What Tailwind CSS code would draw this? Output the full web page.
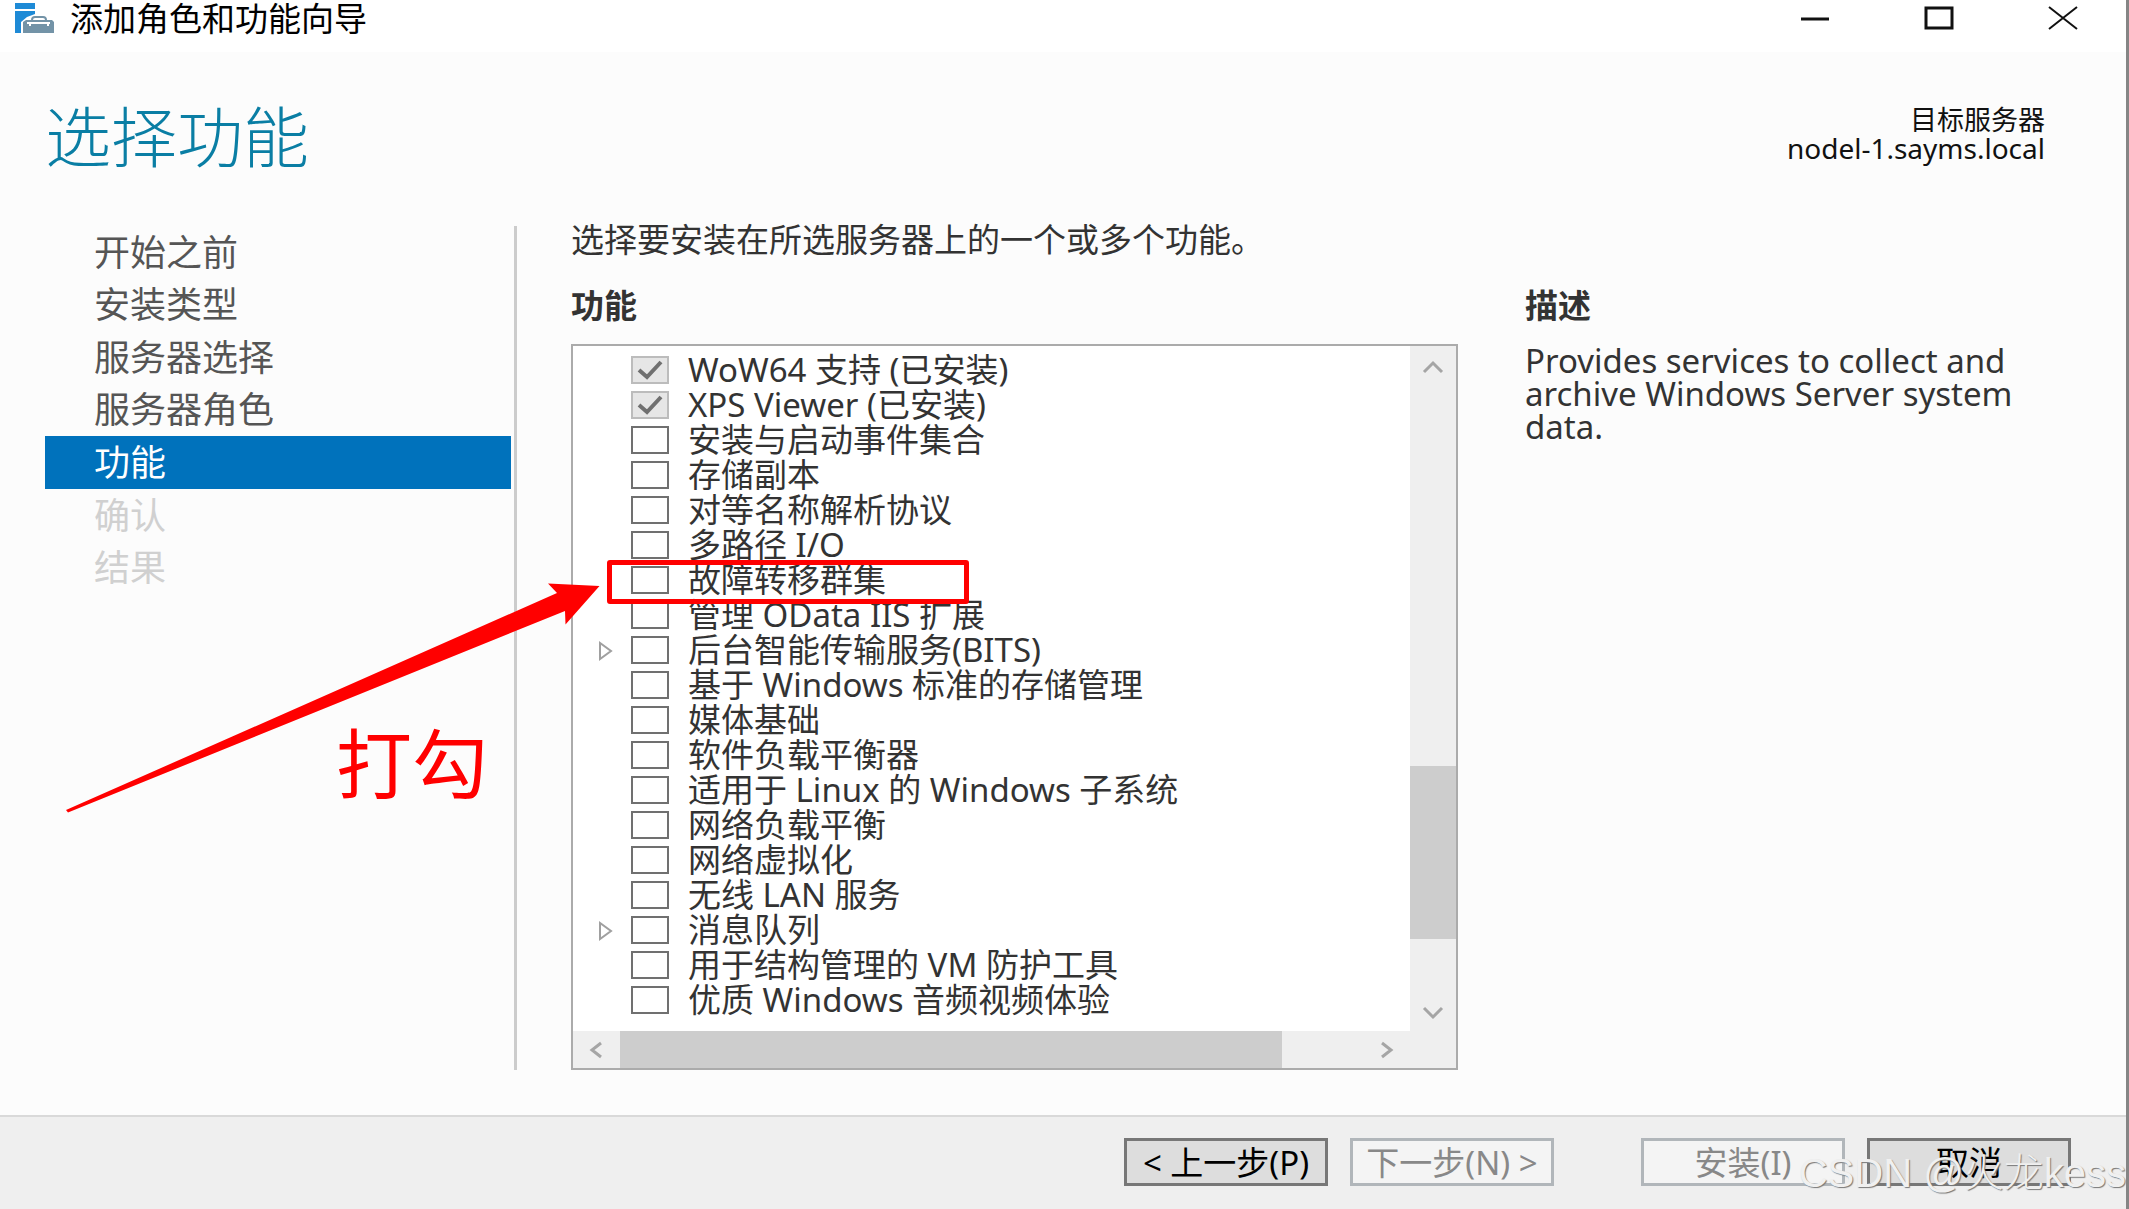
<!DOCTYPE html>
<html lang="zh-CN">
<head>
    <meta charset="UTF-8">
    <meta name="viewport" content="width=device-width, initial-scale=1.0">
    <title>添加角色和功能向导</title>
    <script src="https://cdn.jsdelivr.net/npm/@tailwindcss/browser@4"></script>
    <style>
        body {
            font-family: 'Noto Sans', 'Noto Sans CJK SC', sans-serif;
        }
        /* Grey tick of the installed features */
        .feature:checked {
            background: #e6e6e6 url("data:image/svg+xml,%3Csvg xmlns='http://www.w3.org/2000/svg' viewBox='0 0 34 24'%3E%3Cpath d='M6 12l8 7L28 4' fill='none' stroke='%23707070' stroke-width='4'/%3E%3C/svg%3E") center / 100% 100% no-repeat;
            border-color: #bcbcbc;
        }
    </style>
</head>

<body class="min-h-screen flex flex-col relative overflow-x-hidden bg-[#fcfcfc] text-[#333] text-[33px] leading-[35px] border-r-3 border-[#858585]">

    <!-- Title bar -->
    <header class="h-[52px] shrink-0 bg-white flex items-start justify-between pl-[14px] pr-12">
        <div class="flex items-center gap-4 text-black">
            <svg class="w-10 h-9" viewBox="0 0 40 36">
                <path d="M1 3h20v6H1zM1 11h20v3l-8 3-6 5v11H1z" fill="#1e8ad6"/>
                <path d="M9 22l3-2h26l2 2v11H9z" fill="#7393a7"/>
                <path d="M18 20q0-3 3-3h8q3 0 3 3" fill="none" stroke="#7393a7" stroke-width="2"/>
                <path d="M13 23h23M16 23v3M34 23v3" fill="none" stroke="#fff" stroke-width="2"/>
            </svg>
            <span>添加角色和功能向导</span>
        </div>
        <div class="flex gap-[94px] pt-1">
            <button aria-label="最小化" class="w-[30px] h-7">
                <svg class="w-full h-full" viewBox="0 0 30 28"><path d="M1 15h28" stroke="#111" stroke-width="3"/></svg>
            </button>
            <button aria-label="最大化" class="w-[30px] h-7">
                <svg class="w-full h-full" viewBox="0 0 30 28"><path d="M2 4h26v20H2z" fill="none" stroke="#111" stroke-width="3"/></svg>
            </button>
            <button aria-label="关闭" class="w-[30px] h-7">
                <svg class="w-full h-full" viewBox="0 0 30 28"><path d="M1 3l28 22M29 3L1 25" stroke="#111" stroke-width="2"/></svg>
            </button>
        </div>
    </header>

    <!-- Page heading -->
    <div class="h-[174px] shrink-0 flex justify-between pl-[45px] pr-[81px] pt-12">
        <h1 class="text-[66px] leading-[72px] font-light text-[#0a7ea4]">选择功能</h1>
        <div class="pt-1.5 text-right text-[27px] leading-7 text-[#111]">
            <p>目标服务器</p>
            <p class="text-[28px]">nodel-1.sayms.local</p>
        </div>
    </div>

    <main class="grow grid grid-cols-[472px_minmax(0,941fr)_minmax(0,587fr)] pl-[45px] pr-[81px] pb-[45px]">
        <!-- Wizard steps -->
        <nav class="border-r-3 border-[#ccc] pr-[3px]">
            <ul class="grid grid-rows-7 h-92 text-[36px] text-[#555]">
                <li><a href="#" class="flex h-full items-center pl-[49px]">开始之前</a></li>
                <li><a href="#" class="flex h-full items-center pl-[49px]">安装类型</a></li>
                <li><a href="#" class="flex h-full items-center pl-[49px]">服务器选择</a></li>
                <li><a href="#" class="flex h-full items-center pl-[49px]">服务器角色</a></li>
                <li><a href="#" class="flex h-full items-center pl-[49px] bg-[#0072bc] text-white">功能</a></li>
                <li><a href="#" class="flex h-full items-center pl-[49px] text-[#d0d0d0]">确认</a></li>
                <li><a href="#" class="flex h-full items-center pl-[49px] text-[#d0d0d0]">结果</a></li>
            </ul>
        </nav>

        <!-- Feature list -->
        <section class="flex flex-col pl-[54px]">
            <p class="-mt-1 leading-[36px] whitespace-nowrap">选择要安装在所选服务器上的一个或多个功能。</p>
            <h2 class="mt-[30px] leading-[36px] font-bold">功能</h2>
            <div class="mt-[20px] grow border-2 border-[#ababab] bg-white grid grid-cols-[minmax(0,1fr)_46px] grid-rows-[1fr_37px]">
                <ul id="features" class="pt-1.5 pl-[25px] pb-3 whitespace-nowrap"></ul>
                <div class="bg-[#efefef] flex flex-col items-center">
                    <svg class="w-6 h-4 mt-[13px]" viewBox="0 0 24 16"><path d="M3 13l9-9 9 9" fill="none" stroke="#a5a5a5" stroke-width="3"/></svg>
                    <div class="w-full h-[173px] mt-auto bg-[#cdcdcd]"></div>
                    <svg class="w-6 h-4 mt-[66px] mb-[10px]" viewBox="0 0 24 16"><path d="M3 3l9 9 9-9" fill="none" stroke="#a5a5a5" stroke-width="3"/></svg>
                </div>
                <div class="bg-[#efefef] flex items-center">
                    <svg class="w-4 h-5 ml-[15px] mr-4" viewBox="0 0 16 20"><path d="M13 3l-9 7 9 7" fill="none" stroke="#a5a5a5" stroke-width="3"/></svg>
                    <div class="grow h-full bg-[#cdcdcd]"></div>
                    <svg class="w-4 h-5 ml-[97px] mr-[15px]" viewBox="0 0 16 20"><path d="M3 3l9 7-9 7" fill="none" stroke="#a5a5a5" stroke-width="3"/></svg>
                </div>
                <div class="bg-[#efefef]"></div>
            </div>
        </section>

        <!-- Description -->
        <section class="pl-[67px]">
            <h2 class="mt-[62px] leading-[36px] font-bold">描述</h2>
            <p class="mt-[20px] leading-[33px]">Provides services to collect and archive Windows Server system data.</p>
        </section>
    </main>

    <!-- Wizard buttons -->
    <footer class="h-[94px] shrink-0 border-t-2 border-[#d9d9d9] bg-[#efefef] flex justify-end gap-[22px] pt-[21px] pr-[55px]">
        <button class="w-[204px] h-12 border-3 border-[#777] bg-[#ddd] text-black">&lt; 上一步(P)</button>
        <button disabled class="w-[204px] h-12 border-3 border-[#b1b6ba] bg-[#f4f4f4] text-[#888]">下一步(N) &gt;</button>
        <button disabled class="w-[204px] h-12 ml-[65px] border-3 border-[#b1b6ba] bg-[#f4f4f4] text-[#888]">安装(I)</button>
        <button class="w-[204px] h-12 border-3 border-[#777] bg-[#ddd] text-black">取消</button>
    </footer>

    <!-- Annotation arrow and note -->
    <svg class="absolute left-[60px] top-[570px] w-[550px] h-[250px] pointer-events-none" viewBox="60 570 550 250">
        <path d="M66 810L557 593l-9-9.500 51.500 2.500-34 38.500-.5-13.500L68 812.500z" fill="#f00"/>
    </svg>
    <p class="absolute left-[336px] top-[726px] text-[76px] leading-[76px] text-[#f00]">打勾</p>
    <p class="absolute right-0 bottom-[14px] font-['Liberation_Sans','Noto_Sans_CJK_SC',sans-serif] text-[40px] leading-[44px] font-light text-[#f0f0f0] [text-shadow:1px_1px_1px_#777] pointer-events-none">CSDN @火龙kess</p>

    <script>
        const features = [
            { name: 'WoW64 支持 (已安装)', installed: true },
            { name: 'XPS Viewer (已安装)', installed: true },
            { name: '安装与启动事件集合' },
            { name: '存储副本' },
            { name: '对等名称解析协议' },
            { name: '多路径 I/O' },
            { name: '故障转移群集', marked: true },
            { name: '管理 OData IIS 扩展' },
            { name: '后台智能传输服务(BITS)', expandable: true },
            { name: '基于 Windows 标准的存储管理' },
            { name: '媒体基础' },
            { name: '软件负载平衡器' },
            { name: '适用于 Linux 的 Windows 子系统' },
            { name: '网络负载平衡' },
            { name: '网络虚拟化' },
            { name: '无线 LAN 服务' },
            { name: '消息队列', expandable: true },
            { name: '用于结构管理的 VM 防护工具' },
            { name: '优质 Windows 音频视频体验' }
        ];

        const arrow = '<svg class="w-4 h-5" viewBox="0 0 16 20"><path d="M2 2v16l11-8z" fill="none" stroke="#a0a0a0" stroke-width="2"/></svg>';
        const mark = '<span class="absolute left-[9px] -top-0.5 z-10 w-[362px] h-[44px] border-5 border-[#f00] rounded-[3px] pointer-events-none"></span>';

        document.getElementById('features').innerHTML = features.map((f, i) => `
            <li class="relative flex items-center h-[35px]">
                <span class="w-[33px] flex pt-0.5">${f.expandable ? arrow : ''}</span>
                <input type="checkbox" id="feature-${i}" ${f.installed ? 'checked disabled' : ''}
                    class="feature appearance-none shrink-0 w-[38px] h-7 border-2 border-[#707070] bg-white">
                <label for="feature-${i}" class="pl-[19px]">${f.name}</label>
                ${f.marked ? mark : ''}
            </li>`).join('');
    </script>

</body>
</html>
